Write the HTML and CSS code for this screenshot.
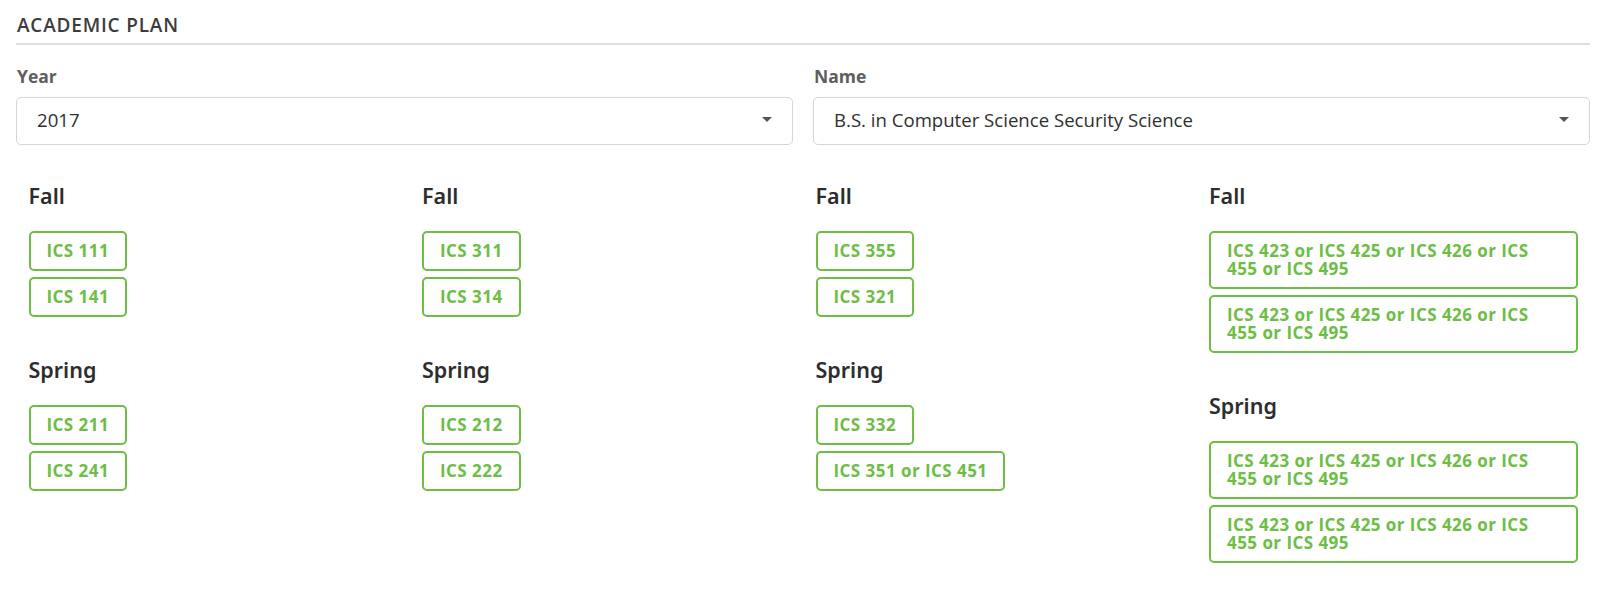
FILE: index.html
```html
<!DOCTYPE html>
<html lang="en">
<head>
<meta charset="utf-8">
<title>Academic Plan</title>
<link rel="stylesheet" href="styles.css">
</head>
<body>
<div class="page">
  <h2 class="title">ACADEMIC PLAN</h2>
  <div class="fields">
    <div class="field">
      <label class="label">Year</label>
      <div class="select"><span class="select-text">2017</span><span class="caret"></span></div>
    </div>
    <div class="field">
      <label class="label">Name</label>
      <div class="select"><span class="select-text">B.S. in Computer Science Security Science</span><span class="caret"></span></div>
    </div>
  </div>
  <div class="plan">
    <div class="year">
      <h3 class="term">Fall</h3>
      <div class="courses">
        <div class="course">ICS 111</div>
        <div class="course">ICS 141</div>
      </div>
      <h3 class="term spring">Spring</h3>
      <div class="courses">
        <div class="course">ICS 211</div>
        <div class="course">ICS 241</div>
      </div>
    </div>
    <div class="year">
      <h3 class="term">Fall</h3>
      <div class="courses">
        <div class="course">ICS 311</div>
        <div class="course">ICS 314</div>
      </div>
      <h3 class="term spring">Spring</h3>
      <div class="courses">
        <div class="course">ICS 212</div>
        <div class="course">ICS 222</div>
      </div>
    </div>
    <div class="year">
      <h3 class="term">Fall</h3>
      <div class="courses">
        <div class="course">ICS 355</div>
        <div class="course">ICS 321</div>
      </div>
      <h3 class="term spring">Spring</h3>
      <div class="courses">
        <div class="course">ICS 332</div>
        <div class="course">ICS 351 or ICS 451</div>
      </div>
    </div>
    <div class="year">
      <h3 class="term">Fall</h3>
      <div class="courses">
        <div class="course">ICS 423 or ICS 425 or ICS 426 or ICS 455 or ICS 495</div>
        <div class="course">ICS 423 or ICS 425 or ICS 426 or ICS 455 or ICS 495</div>
      </div>
      <h3 class="term spring">Spring</h3>
      <div class="courses">
        <div class="course">ICS 423 or ICS 425 or ICS 426 or ICS 455 or ICS 495</div>
        <div class="course">ICS 423 or ICS 425 or ICS 426 or ICS 455 or ICS 495</div>
      </div>
    </div>
  </div>
</div>
</body>
</html>
```
FILE: styles.css
```css
* { box-sizing: border-box; }

body {
  margin: 0;
  background: #fff;
  font-family: "Open Sans", "Noto Sans", sans-serif;
  color: #333;
}

.page {
  padding: 0 16px;
}

.title {
  margin: 0;
  padding: 13px 0 5px 1px;
  font-family: "Open Sans", sans-serif;
  font-size: 19px;
  line-height: 25px;
  font-weight: 600;
  letter-spacing: 0.8px;
  color: #3c3c3c;
  border-bottom: 2px solid #dedede;
}

.fields {
  display: grid;
  grid-template-columns: 1fr 1fr;
  column-gap: 20px;
  margin-top: 21px;
}

.field {
  display: flex;
  flex-direction: column;
}

.label {
  display: block;
  padding-left: 1px;
  font-family: "Open Sans", sans-serif;
  font-weight: 700;
  font-size: 17.5px;
  line-height: 20px;
  color: #5e5e5e;
  margin-bottom: 11px;
}

.select {
  display: flex;
  align-items: center;
  justify-content: space-between;
  height: 48px;
  padding: 0 20px 4px 20px;
  border: 1px solid #d6d6d6;
  border-radius: 5px;
  background: #fff;
}

.select-text {
  font-family: "Open Sans", sans-serif;
  font-size: 18.6px;
  color: #2f2f2f;
}

.caret {
  width: 0;
  height: 0;
  border-left: 5px solid transparent;
  border-right: 5px solid transparent;
  border-top: 5px solid #555;
}

.plan {
  display: grid;
  grid-template-columns: repeat(4, 1fr);
  margin-top: 37.5px;
}

.year {
  padding: 0 12.5px;
  min-width: 0;
}

.term {
  margin: 0 0 23.5px;
  font-family: "Noto Sans", "Open Sans", sans-serif;
  font-weight: 600;
  font-size: 21.5px;
  line-height: 25px;
  color: #2d2d2d;
}

.term.spring {
  margin-top: 39.5px;
}

.courses {
  display: flex;
  flex-direction: column;
  align-items: flex-start;
  gap: 6px;
}

.course {
  max-width: 100%;
  padding: 9px 16px;
  border: 2px solid #6cbe45;
  border-radius: 5px;
  font-family: "Open Sans", sans-serif;
  font-weight: 700;
  font-size: 17px;
  line-height: 18px;
  letter-spacing: 0.45px;
  color: #6cbe45;
}
```
